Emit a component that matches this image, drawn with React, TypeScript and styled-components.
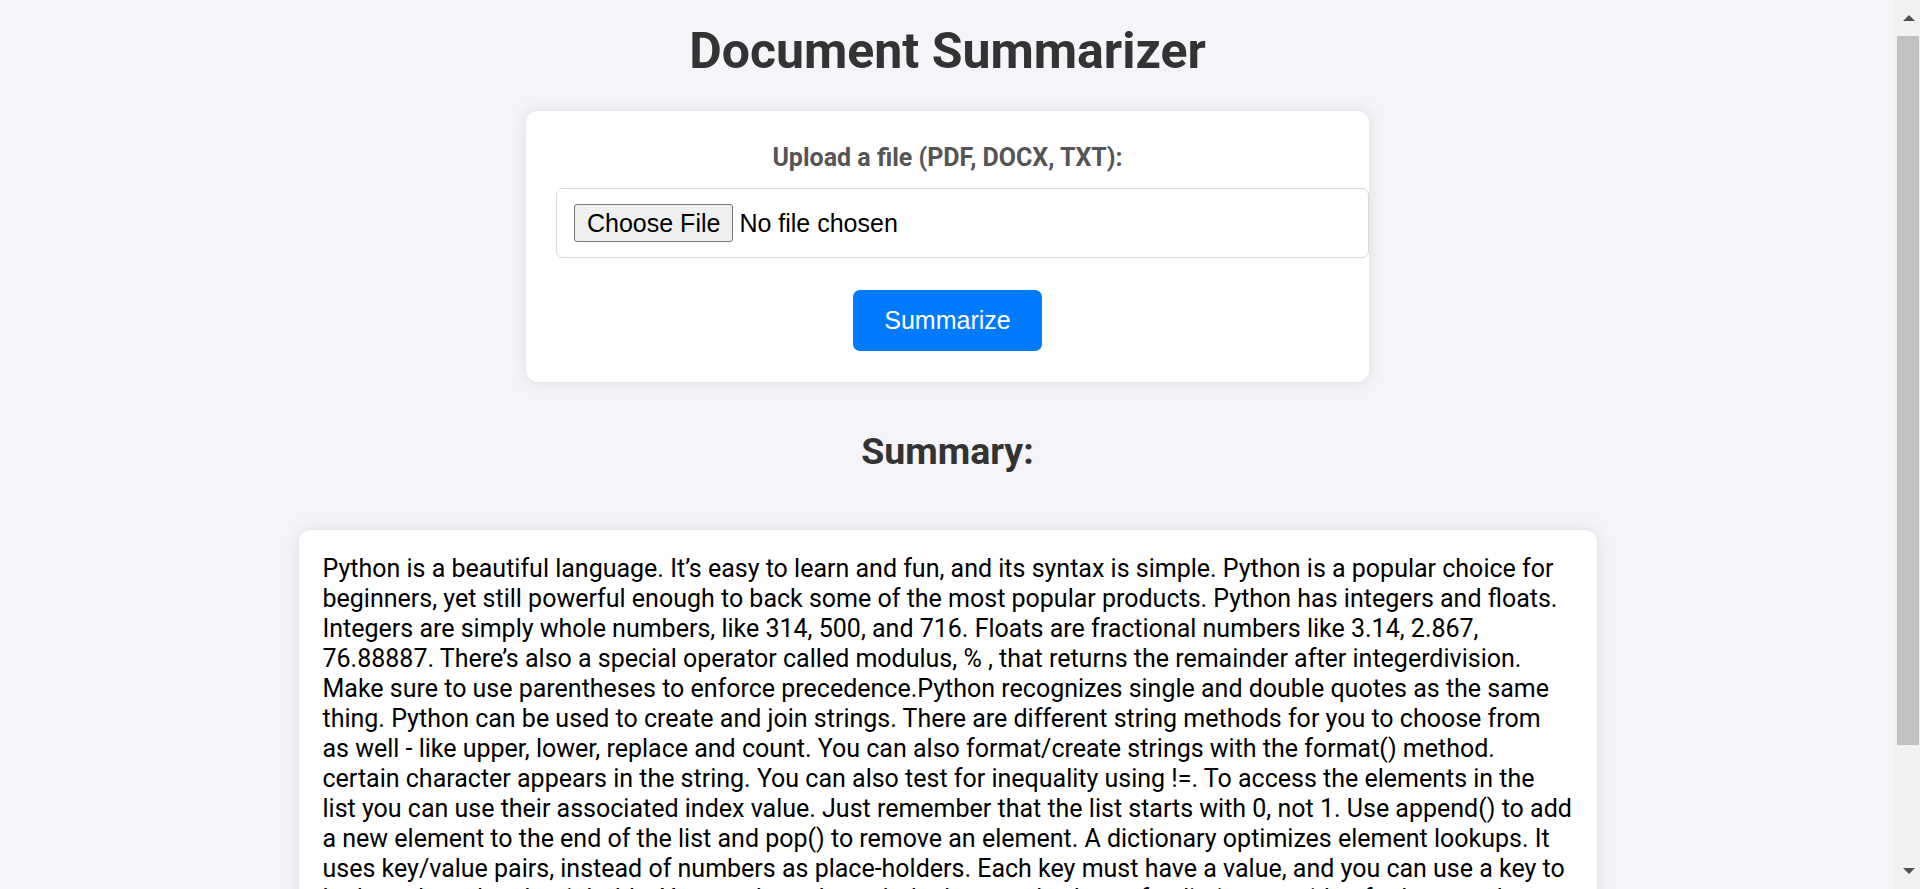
import React from "react";
import styled, { createGlobalStyle } from "styled-components";

const GlobalStyle = createGlobalStyle`
  html, body {
    margin: 0;
    padding: 0;
    height: 100%;
    overflow: hidden;
    background: #ffffff;
  }
  * { box-sizing: border-box; }
`;

const Shell = styled.div`
  display: flex;
  height: 100vh;
  margin-right: 6px;
`;

const Main = styled.main`
  flex: 1;
  min-width: 0;
  overflow: hidden;
  background: #f4f4f9;
  display: flex;
  flex-direction: column;
  align-items: center;
  font-family: Roboto, "Liberation Sans", Arial, sans-serif;
`;

const Title = styled.h1`
  margin: 22px 0 31px;
  font-size: 50px;
  font-weight: 700;
  line-height: normal;
  color: #333333;
  text-align: center;
`;

const Card = styled.section`
  width: 843px;
  padding: 32px 30px 31px;
  background: #ffffff;
  border-radius: 12px;
  box-shadow: 0 0 15px rgba(0, 0, 0, 0.1);
  display: flex;
  flex-direction: column;
  align-items: stretch;
`;

const Label = styled.label`
  display: block;
  margin-bottom: 16px;
  font-size: 25px;
  font-weight: 700;
  line-height: normal;
  color: #555555;
  text-align: center;
`;

const FileField = styled.div`
  width: 813px;
  height: 70px;
  padding: 0 16px 0 17px;
  border: 1px solid #d9d9d9;
  border-radius: 7px;
  background: #ffffff;
  display: flex;
  align-items: center;
  gap: 6px;
  font-family: "Liberation Sans", Arial, sans-serif;
  font-size: 25px;
  color: #000000;
`;

const FileButton = styled.span`
  height: 38px;
  padding: 0 12px;
  display: inline-flex;
  align-items: center;
  border: 1px solid #767676;
  border-radius: 3px;
  background: #efefef;
  color: #000000;
  font-size: 25px;
`;

const FileName = styled.span`
  color: #000000;
`;

const SubmitButton = styled.button`
  align-self: center;
  margin-top: 32px;
  width: 189px;
  height: 61px;
  padding: 0;
  border: none;
  border-radius: 7px;
  background: #007bff;
  color: #ffffff;
  font-family: "Liberation Sans", Arial, sans-serif;
  font-size: 25px;
  cursor: pointer;
`;

const SectionTitle = styled.h2`
  margin: 47px 0 57px;
  font-size: 37.5px;
  font-weight: 700;
  line-height: normal;
  color: #333333;
  text-align: center;
`;

const SummaryBox = styled.div`
  width: 1298px;
  flex-shrink: 0;
  padding: 24px;
  margin-bottom: 30px;
  background: #ffffff;
  border-radius: 12px;
  box-shadow: 0 0 15px rgba(0, 0, 0, 0.1);
  font-size: 25px;
  line-height: 30px;
  color: #000000;
  white-space: pre-wrap;
`;

const Track = styled.div`
  width: 25px;
  background: #f1f1f1;
  display: flex;
  flex-direction: column;
`;

const Arrow = styled.div<{ $dir: "up" | "down" }>`
  height: 36px;
  flex-shrink: 0;
  display: flex;
  align-items: center;
  justify-content: center;
  padding-left: 2px;
  &::before {
    content: "";
    width: 0;
    height: 0;
    border-left: 6px solid transparent;
    border-right: 6px solid transparent;
    ${(p) =>
      p.$dir === "up"
        ? "border-bottom: 6px solid #505050;"
        : "border-top: 6px solid #505050;"}
  }
`;

const Thumb = styled.div`
  height: 709px;
  margin-left: 2px;
  margin-right: 1px;
  background: #c1c1c1;
  flex-shrink: 0;
`;

const TrackSpacer = styled.div`
  flex: 1;
`;

const summary =
  "Python is a beautiful language. It\u2019s easy to learn and fun, and its syntax is simple. Python is a popular choice for beginners, yet still powerful enough to back some of the most popular products. Python has integers and floats. Integers are simply whole numbers, like 314, 500, and 716. Floats are fractional numbers like 3.14, 2.867, 76.88887. There\u2019s also a special operator called modulus, % , that returns the remainder after integerdivision. Make sure to use parentheses to enforce precedence.Python recognizes single and double quotes as the same thing. Python can be used to create and join strings. There are different string methods for you to choose from as well - like upper, lower, replace and count. You can also format/create strings with the format() method.\ncertain character appears in the string. You can also test for inequality using !=. To access the elements in the list you can use their associated index value. Just remember that the list starts with 0, not 1. Use append() to add a new element to the end of the list and pop() to remove an element. A dictionary optimizes element lookups. It uses key/value pairs, instead of numbers as place-holders. Each key must have a value, and you can use a key to look up the value that it holds. You can loop through the keys and values of a dictionary with a for loop, and use the in keyword to check whether a key exists. Tuples are like lists, but they are immutable, which means that they cannot be changed once they are created.";

export default function App() {
  return (
    <>
      <GlobalStyle />
      <Shell>
        <Main>
          <Title>Document Summarizer</Title>
          <Card>
            <Label htmlFor="file">Upload a file (PDF, DOCX, TXT):</Label>
            <FileField id="file">
              <FileButton>Choose File</FileButton>
              <FileName>No file chosen</FileName>
            </FileField>
            <SubmitButton type="button">Summarize</SubmitButton>
          </Card>
          <SectionTitle>Summary:</SectionTitle>
          <SummaryBox>{summary}</SummaryBox>
        </Main>
        <Track>
          <Arrow $dir="up" />
          <Thumb />
          <TrackSpacer />
          <Arrow $dir="down" />
        </Track>
      </Shell>
    </>
  );
}
